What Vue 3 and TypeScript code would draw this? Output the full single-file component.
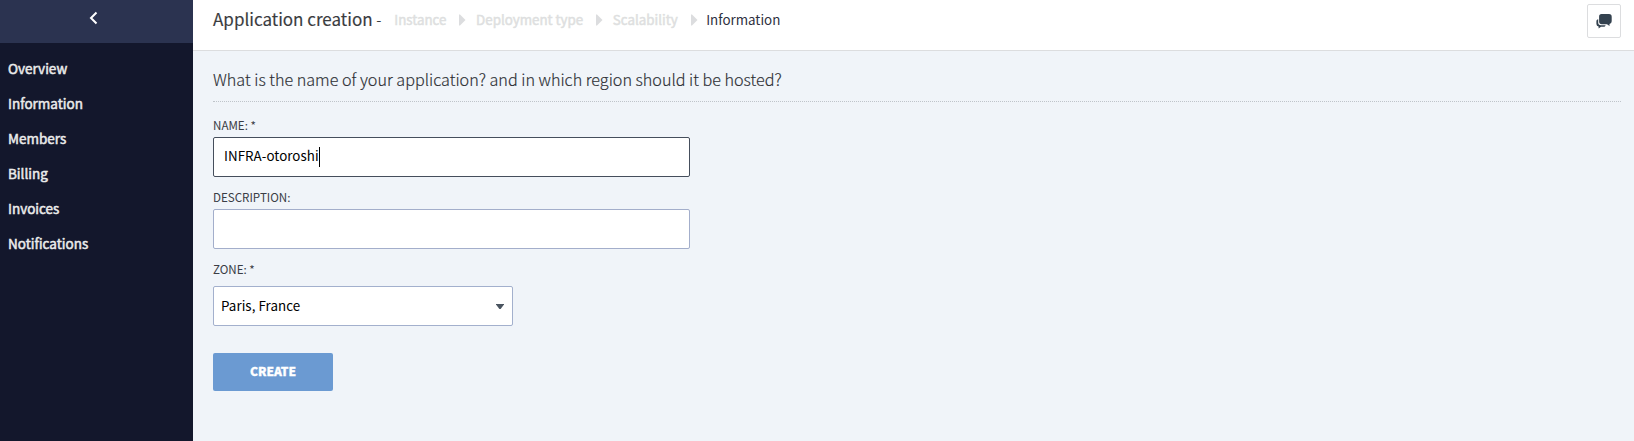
<script setup lang="ts">
import { ref } from 'vue'

const menu: string[] = ['Overview', 'Information', 'Members', 'Billing', 'Invoices', 'Notifications']
const steps: string[] = ['Instance', 'Deployment type', 'Scalability']
const name = ref('INFRA-otoroshi')
const description = ref('')
const zone = ref('Paris, France')
</script>

<template>
  <div class="app">
    <aside class="sidebar">
      <button class="collapse" aria-label="Collapse">
        <svg width="10" height="14" viewBox="0 0 10 14"><path d="M8.500 1.500 3 7l5.500 5.500" fill="none" stroke="#fff" stroke-width="2" /></svg>
      </button>
      <nav class="menu">
        <a v-for="item in menu" :key="item" class="menu-item"><span>{{ item }}</span></a>
      </nav>
    </aside>
    <main class="main">
      <header class="topbar">
        <h1 class="title"><span>Application creation</span></h1>
        <span class="dash">-</span>
        <div class="steps">
          <template v-for="step in steps" :key="step">
            <span class="step">{{ step }}</span>
            <svg class="sep" width="7" height="12" viewBox="0 0 7 12"><path d="M0 0.500h1L6.500 6 1 11.500H0z" fill="#dcdddf" /></svg>
          </template>
          <span class="step current">Information</span>
        </div>
        <button class="chat" aria-label="Chat">
          <svg width="16" height="15" viewBox="0 0 16 15" fill="#34424f">
            <path d="M5.500 0h7.500a2.700 2.700 0 0 1 2.700 2.700v4.600A2.700 2.700 0 0 1 13.500 10v2L11 10.200H5.800A2.700 2.700 0 0 1 3.100 7.500V2.700A2.600 2.600 0 0 1 5.500 0z" />
            <path d="M2.200 5.300v3.200a2.700 2.700 0 0 0 2.700 2.700h4.700c-.3 1-1 1.600-2 1.600H5L2.600 14.500v-2A2.600 2.600 0 0 1 .4 10V7.300c0-1 .7-1.800 1.800-2z" />
          </svg>
        </button>
      </header>
      <section class="content">
        <h2 class="question"><span>What is the name of your application? and in which region should it be hosted?</span></h2>
        <form class="form" @submit.prevent>
          <label class="label"><span>NAME: *</span></label>
          <div class="field focused"><span>{{ name }}</span><i class="caret"></i></div>
          <label class="label"><span>DESCRIPTION:</span></label>
          <div class="field">{{ description }}</div>
          <label class="label zone-label"><span>ZONE: *</span></label>
          <div class="select">
            <span>{{ zone }}</span>
            <svg width="8" height="5" viewBox="0 0 8 5"><path d="M0 0h8v.6L4.600 5H3.400L0 .6z" fill="#4a5560" /></svg>
          </div>
          <button class="create"><span>CREATE</span></button>
        </form>
      </section>
    </main>
  </div>
</template>

<style>
body { margin: 0; overflow: hidden; }
</style>

<style scoped>
* { box-sizing: border-box; }
.app {
  display: flex;
  width: 1634px;
  height: 441px;
  font-family: "Noto Sans CJK SC", "Noto Sans", sans-serif;
  font-size: 13.35px;
  color: #3a3c40;
  background: #f0f4f9;
}
button { font-family: inherit; padding: 0; margin: 0; }
.sidebar { width: 193px; background: #13172c; flex: none; }
.collapse {
  display: flex;
  width: 100%;
  height: 43px;
  padding: 0 7px 7px 0;
  align-items: center;
  justify-content: center;
  background: #2b3350;
  border: 0;
}
.menu { display: flex; flex-direction: column; padding: 8px 0 0 8px; }
.menu-item { height: 35px; line-height: 35px; font-size: 13.5px; color: #ebebeb; -webkit-text-stroke: 0.5px #ebebeb; }
.main { flex: 1; min-width: 0; }
.topbar {
  display: flex;
  align-items: flex-start;
  height: 51px;
  padding: 4px 13px 0 20px;
  background: #fff;
  border-bottom: 1px solid #dcdddf;
  line-height: 32px;
}
.title { margin: 0; font-size: 17px; font-weight: 400; line-height: 30px; -webkit-text-stroke: 0.15px #3a3c40; }
.dash { margin-left: 4px; line-height: 31px; -webkit-text-stroke: 0.25px #3a3c40; }
.steps { display: flex; align-items: center; margin-left: 13px; height: 31px; }
.step { color: #dedfe0; -webkit-text-stroke: 0.5px #dedfe0; }
.sep { margin: 0 9.7px 0 12.9px; }
.current { margin-left: -1px; color: #2e3040; -webkit-text-stroke: 0; }
.chat {
  display: flex;
  align-items: center;
  justify-content: center;
  width: 34px;
  height: 34px;
  margin-left: auto;
  background: #fff;
  border: 1px solid #dcdddf;
  border-radius: 2px;
}
.content { padding: 10px 13px 0 20px; }
.question {
  margin: 0;
  height: 41px;
  line-height: 36px;
  font-size: 16.17px;
  font-weight: 300;
  color: #2c2e33;
  -webkit-text-stroke: 0.15px #2c2e33;
  border-bottom: 1px dotted #bfc4ca;
}
.form { display: flex; flex-direction: column; align-items: flex-start; padding-top: 13px; }
.label { height: 22px; line-height: 20px; font-size: 11.6px; color: #3a3d45; }
.field {
  display: flex;
  align-items: center;
  width: 477px;
  height: 40px;
  padding: 0 10px;
  margin-bottom: 10px;
  line-height: 20px;
  letter-spacing: 0.05px;
  color: #000;
  background: #fff;
  border: 1px solid #a3aecb;
  border-radius: 2px;
}
.focused { border-color: #454e5c; }
.focused span { padding-bottom: 2px; }
.caret { width: 1px; height: 20px; background: #000; }
.zone-label { height: 27px; }
.select {
  display: flex;
  align-items: center;
  justify-content: space-between;
  width: 300px;
  height: 40px;
  padding: 0 8px 0 7px;
  line-height: 20px;
  letter-spacing: 0.05px;
  color: #000;
  background: #fff;
  border: 1px solid #a3b0cd;
  border-radius: 2px;
}
.create {
  width: 120px;
  height: 38px;
  padding-bottom: 2px;
  margin-top: 27px;
  color: #fff;
  font-size: 12px;
  font-weight: 900;
  line-height: 20px;
  -webkit-text-stroke: 0.3px #fff;
  background: #6b9ad2;
  border: 0;
  border-radius: 2px;
}
</style>
